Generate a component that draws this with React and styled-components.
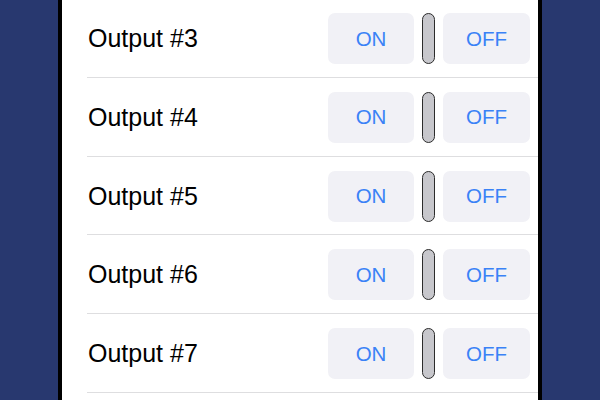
import React from 'react';
import styled, { createGlobalStyle } from 'styled-components';

const GlobalStyle = createGlobalStyle`
  html, body {
    margin: 0;
    padding: 0;
    height: 100%;
    overflow: hidden;
    background-color: #28386f;
  }
  #root {
    height: 100%;
  }
`;

const Screen = styled.div`
  display: flex;
  justify-content: center;
  height: 400px;
  overflow: hidden;
`;

const Phone = styled.div`
  width: 476px;
  height: 100%;
  background-color: #fff;
  border-left: 4px solid #000;
  border-right: 4px solid #000;
  overflow: hidden;
`;

const List = styled.div`
  display: flex;
  flex-direction: column;
  margin-top: -1px;
  margin-left: 25px;
`;

const Row = styled.div`
  box-sizing: border-box;
  height: 78.75px;
  flex-shrink: 0;
  display: flex;
  align-items: center;
  padding: 1.5px 8px 0 0;
  border-bottom: 1px solid #dedee0;
`;

const Label = styled.div`
  flex: 1;
  font-family: "Liberation Sans", Arial, sans-serif;
  font-size: 25px;
  color: #000;
  padding-left: 1px;
`;

const Controls = styled.div`
  display: flex;
  align-items: center;
  gap: 8px;
`;

const Button = styled.button`
  width: ${(p) => p.$width}px;
  height: 51px;
  border: none;
  border-radius: 7px;
  background-color: #f1f1f6;
  color: #3a82f6;
  font-family: "Liberation Sans", Arial, sans-serif;
  font-size: 20.5px;
  padding: 0;
  cursor: pointer;
`;

const Knob = styled.div`
  box-sizing: border-box;
  width: 13px;
  height: 51px;
  border: 1.5px solid #2b2b2b;
  border-radius: 7px;
  background-color: #c7c7cc;
`;

const outputs = [3, 4, 5, 6, 7];

const App = () => {
  return (
    <>
      <GlobalStyle />
      <Screen>
        <Phone>
          <List>
            {outputs.map((n) => (
              <Row key={n}>
                <Label>Output #{n}</Label>
                <Controls>
                  <Button $width={86}>ON</Button>
                  <Knob />
                  <Button $width={87}>OFF</Button>
                </Controls>
              </Row>
            ))}
          </List>
        </Phone>
      </Screen>
    </>
  );
};

export default App;
